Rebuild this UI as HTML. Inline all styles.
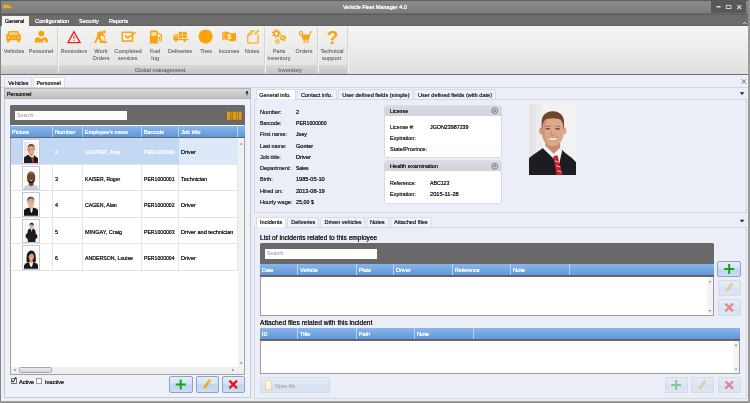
<!DOCTYPE html>
<html><head><meta charset="utf-8"><title>Vehicle Fleet Manager 4.0</title>
<style>
*{box-sizing:border-box;margin:0;padding:0}
html,body{width:750px;height:403px;overflow:hidden;background:#ebeef6;font-family:"Liberation Sans",sans-serif;font-size:5.6px;color:#222}
.a{position:absolute}
.s{-webkit-text-stroke:0.07px;text-shadow:0 0 .6px currentColor;display:inline-block;transform-origin:0 50%;white-space:nowrap}
.rt .s,.tab .s{transform-origin:50% 50%}
.rt .s{-webkit-text-stroke:0;text-shadow:0 0 .5px rgba(108,108,108,.7)}
.t{position:absolute;white-space:nowrap;line-height:8px;height:8px;font-size:5.6px}
#title{left:0;top:0;width:750px;height:14.5px;background:linear-gradient(#5e5e5e 0,#606060 0.8px,#8b8b8b 1.6px,#848484 7px,#7b7b7b 13px,#5c5c5c 14px,#5c5c5c 14.5px)}
#menubar{left:0;top:14.5px;width:750px;height:11.5px;background:linear-gradient(#6c6c6c,#6c6c6c 10.2px,#585858 10.8px)}
#ribbon{left:1px;top:25.7px;width:347px;height:39.3px;background:linear-gradient(#f3f3f1,#e5e5e3)}
#ribbon2{left:348px;top:25.7px;width:401px;height:48.3px;background:linear-gradient(#f5f5f4,#ececeb 50%,#dfdfde)}
#rlabel{left:1px;top:65px;width:347px;height:9px;background:linear-gradient(#d8d8d8,#c5c5c5)}
#rline{left:0;top:73.7px;width:750px;height:1px;background:#6e6e6e}
#lb{left:0;top:0;width:1.2px;height:403px;background:linear-gradient(#5c5c5c,#5c5c5c 26px,#868686 26px)}
#rb{left:748.2px;top:0;width:1.8px;height:403px;background:linear-gradient(#8c8c8c,#8c8c8c 26px,#9c9c9c 26px)}
#bb{left:0;top:401px;width:750px;height:2px;background:linear-gradient(#a4a4a4,#8c8c8c)}
.rt{color:#6c6c6c;text-align:center;font-size:5.6px;line-height:7.6px;position:absolute;white-space:nowrap;transform:translateX(-50%)}
.mt{color:#fff}
.tab{position:absolute;border:1px solid #d8dde8;border-bottom:none;border-radius:1.5px 1.5px 0 0;background:#eef1f8;text-align:center;font-size:5.6px;line-height:9px;padding-top:.6px;white-space:nowrap;color:#333}
.tab.sel{background:#fff}
.hdr{position:absolute;background:linear-gradient(#8ab7ea,#5e97da);height:11px}
.hc{position:absolute;top:0;height:11px;padding-top:1px;border-right:1px solid #b9d3f2;color:#fff;font-size:5.6px;line-height:11px;padding-left:2px;white-space:nowrap}
.dark{position:absolute;background:#696969}
.search{position:absolute;background:#fff;color:#bbb;font-size:5.6px;line-height:9.5px;padding-left:2px}
.row{position:absolute;left:11px;width:227px;height:26.5px;border-bottom:1px solid #e3e3e3;background:#fff}
.cell{position:absolute;top:0;height:26.5px;line-height:26.5px;padding-top:1.2px;font-size:5.6px;white-space:nowrap;padding-left:2.5px;border-right:1px solid #e6e6e6;color:#222}
.row.sel{background:#c3d8f2}.row.sel .cell{color:#fff;border-right-color:transparent}.row.sel .cell.cur{background:#dde9f9;color:#222}
.pic{position:absolute;left:10.5px;top:1.5px;width:18px;height:24px;background:#f4f4f4;border:1px solid #bbb}
.btn{position:absolute;border:1px solid #93a2bb;border-radius:2px;background:linear-gradient(#e3eefb,#d3e3f8 48%,#bdd4f1 52%,#cadef6)}
.btn.dis{border-color:#d3dae8;background:linear-gradient(#e6ecf7,#dde6f4 50%,#d6e1f2 52%,#dbe5f4)}
.lab{color:#333}
.grp{position:absolute;background:#fff;border-radius:1.5px;box-shadow:0 0 0 .6px #c9cdd8}
.grph{position:absolute;left:0;top:0;right:0;height:10px;border-radius:1.5px 1.5px 0 0;background:linear-gradient(#d8dbe3,#d0d3dc);font-size:5.6px;line-height:10px;padding-left:5.5px;color:#222}
</style></head><body>
<!-- title & menu -->
<div class="a" id="title"></div>
<div class="t mt" style="left:343px;top:3.3px"><span class="s" style="transform:scaleX(0.981)">Vehicle Fleet Manager 4.0</span></div>
<div class="a" id="menubar"></div>
<div class="a" id="ribbon"></div><div class="a" id="ribbon2"></div>
<div class="a" id="rlabel"></div>
<div class="a" id="rline"></div>
<div class="a" style="left:2px;top:15.6px;width:27.2px;height:10.4px;background:#f3f3f1;border-radius:1px 1px 0 0"></div>
<div class="t" style="left:5px;top:17px"><span class="s" style="transform:scaleX(0.959)">General</span></div>
<div class="t mt" style="left:35px;top:17px"><span class="s" style="transform:scaleX(1.025)">Configuration</span></div>
<div class="t mt" style="left:79px;top:17px"><span class="s" style="transform:scaleX(0.972)">Security</span></div>
<div class="t mt" style="left:109px;top:17px"><span class="s" style="transform:scaleX(0.977)">Reports</span></div>

<div class="rt" style="left:14px;top:47.6px"><span class="s" style="transform:scaleX(0.972)">Vehicles</span></div>
<div class="rt" style="left:41px;top:47.6px"><span class="s" style="transform:scaleX(0.968)">Personnel</span></div>
<div class="rt" style="left:74px;top:47.6px"><span class="s" style="transform:scaleX(0.971)">Reminders</span></div>
<div class="rt" style="left:101px;top:47.6px"><span class="s" style="transform:scaleX(1.026)">Work</span><br><span class="s" style="transform:scaleX(0.981)">Orders</span></div>
<div class="rt" style="left:128px;top:47.6px"><span class="s" style="transform:scaleX(1.011)">Completed</span><br><span class="s" style="transform:scaleX(0.938)">services</span></div>
<div class="rt" style="left:155px;top:47.6px"><span class="s" style="transform:scaleX(0.939)">Fuel</span><br><span class="s" style="transform:scaleX(1.066)">log</span></div>
<div class="rt" style="left:180px;top:47.6px"><span class="s" style="transform:scaleX(0.972)">Deliveries</span></div>
<div class="rt" style="left:206px;top:47.6px"><span class="s" style="transform:scaleX(0.947)">Tires</span></div>
<div class="rt" style="left:229px;top:47.6px"><span class="s" style="transform:scaleX(0.980)">Incomes</span></div>
<div class="rt" style="left:252px;top:47.6px"><span class="s" style="transform:scaleX(1.007)">Notes</span></div>
<div class="rt" style="left:279px;top:47.6px"><span class="s" style="transform:scaleX(0.938)">Parts</span><br><span class="s" style="transform:scaleX(1.023)">inventory</span></div>
<div class="rt" style="left:304px;top:47.6px"><span class="s" style="transform:scaleX(0.981)">Orders</span></div>
<div class="rt" style="left:332px;top:47.6px"><span class="s" style="transform:scaleX(0.987)">Technical</span><br><span class="s" style="transform:scaleX(1.036)">support</span></div>
<div class="rt" style="left:160px;top:66.6px"><span class="s" style="transform:scaleX(1.001)">Global management</span></div>
<div class="rt" style="left:290px;top:66.6px"><span class="s" style="transform:scaleX(1.015)">Inventory</span></div>
<!--ICONS-->
<svg class="a" style="left:0;top:0" width="750" height="80" viewBox="0 0 750 80">
<g fill="#fba20d" stroke="none">
<!-- logo -->
<path d="M3.2 4.7h4.8v3.2H3.2z M8 5.4h2l1.5 1.3v1.2H8z" fill="#f7a811"/>
<circle cx="4.8" cy="8.1" r="0.8" fill="#f7a811"/><circle cx="9.6" cy="8.1" r="0.8" fill="#f7a811"/>
<!-- car -->
<path d="M8.6 31.3 Q9 31 9.6 31 H17.4 Q18 31 18.4 31.3 L19.6 34.6 H20.8 Q21.3 34.6 21.3 35.1 V35.5 H20.2 Q20.8 36 20.8 37 V40.2 H20 V41.6 Q20 42.2 19.4 42.2 H17.8 Q17.2 42.2 17.2 41.6 V40.2 H9.8 V41.6 Q9.8 42.2 9.2 42.2 H7.6 Q7 42.2 7 41.6 V40.2 H6.2 V37 Q6.2 36 6.8 35.5 H5.7 V35.1 Q5.7 34.6 6.2 34.6 H7.4 Z"/>
<path d="M9.6 32.2 H17.4 L18.3 35 H8.7 Z" fill="#f8cf8a"/>
<circle cx="8.6" cy="37.6" r="1" fill="#f2e3c4"/><circle cx="18.4" cy="37.6" r="1" fill="#f2e3c4"/>
<rect x="11" y="37.2" width="5" height="1.2" fill="#f6c66e"/>
<!-- person -->
<circle cx="41.3" cy="33.6" r="2.9"/>
<path d="M34.8 42.6 V40.4 Q34.8 37.6 38.2 37.2 L41.3 39 L44.4 37.2 Q47.8 37.6 47.8 40.4 V42.6 H45.6 V40.6 H43.2 V42.6 Z"/>
<!-- worker -->
<circle cx="104.2" cy="31.8" r="1.6"/>
<path d="M97.4 32.4 L100.8 31 L102.6 32.2 L104.4 35.6 L102.6 36.4 L101.6 34.8 L100.4 37.4 L101.8 40 L101.2 43 H99.6 L100 40.4 L98.2 38.4 L96 43 H94 L96.8 37 Z"/>
<path d="M99.6 43 Q100.4 40.8 103.4 40.4 Q106.8 40.6 107.8 43 Z"/>
<path d="M103.6 35.4 L104.4 35 L105.6 40.4 L104.8 40.6 Z"/>
<!-- fuel -->
<path d="M150 43 V32 Q150 30.6 151.4 30.6 H156.4 Q157.8 30.6 157.8 32 V43 H158.8 V43.4 H149 V43 Z"/>
<rect x="151.4" y="32.2" width="5" height="3.8" fill="#f4ddb0"/>
<path d="M158.6 32.2 L161.4 34.4 Q162 35 162 36 V40.4 Q162 41.8 160.6 41.8 Q159.2 41.8 159.2 40.4 V38 H157.8 V37 H160.2 V40.4 Q160.2 40.9 160.6 40.9 Q161 40.9 161 40.4 V36.4 L158 33 Z"/>
<!-- truck boxes -->
<rect x="178.6" y="31.8" width="3.8" height="3" /><rect x="183" y="31.8" width="3.8" height="3"/>
<rect x="178.6" y="35.3" width="3.8" height="3" /><rect x="183" y="35.3" width="3.8" height="3"/>
<path d="M173.4 40.2 V36 Q173.4 34.2 175 34.2 H177.8 V38.9 H188.4 V40.2 Z"/>
<rect x="174.4" y="35.2" width="2.2" height="1.8" fill="#f4ddb0"/>
<circle cx="176" cy="40.8" r="1.1"/><circle cx="184.6" cy="40.8" r="1.1"/>
<!-- tire -->
<circle cx="205.6" cy="36.6" r="7.1"/>
<!-- money -->
<path d="M222 32.4 Q225.5 30.6 229 32.4 Q232.5 34.2 236 32.4 V40.4 Q232.5 42.2 229 40.4 Q225.5 38.6 222 40.4 Z"/>
<path d="M222 32.4 L225 31.6 V39.2 L222 40.4Z" fill="#fdb944"/>
<!-- gears -->
<g fill="none" stroke="#fba20d">
<circle cx="276.4" cy="33.6" r="2.3" stroke-width="1.5"/>
<circle cx="276.4" cy="33.6" r="3.7" stroke-width="1.6" stroke-dasharray="1.45 1.455"/>
<circle cx="283" cy="38" r="1.7" stroke-width="1.2"/>
<circle cx="283" cy="38" r="2.8" stroke-width="1.2" stroke-dasharray="1.1 1.1"/>
<circle cx="277.4" cy="41.4" r="1.2" stroke-width="1"/>
<circle cx="277.4" cy="41.4" r="2.1" stroke-width="1" stroke-dasharray="0.82 0.83"/>
<!-- check -->
<rect x="122.3" y="32.3" width="10.2" height="8.8" stroke-width="1.5"/>
<path d="M125.2 35.4 L127.8 38 L135.6 32.4" stroke-width="1.7"/>
<!-- notes -->
<path d="M247.8 43 V35 L252 30.8 H255.2 M258 34.2 V43 H247.8" stroke-width="1.1"/>
<path d="M248 35 H252 V31" stroke-width="0.9"/>
<path d="M254.8 34.2 L258.8 30.2" stroke-width="1.4"/>
<!-- cart -->
<circle cx="301" cy="33.2" r="1.7" stroke-width="1.1"/>
<path d="M312.2 31.8 H310.6 L308 40 H303.6 L301.6 35" stroke-width="1.1"/>
</g>
<path d="M302.2 34.6 H310 L308.2 39.6 H303.9 Z"/>
<circle cx="304.4" cy="42" r="1"/><circle cx="307.8" cy="42" r="1"/>
</g>
<!-- warning -->
<path d="M74 31.7 L80.1 42.7 H67.9 Z" fill="#f8f1f0" stroke="#ee1c24" stroke-width="1.3" stroke-linejoin="miter"/>
<rect x="73.5" y="35.6" width="1" height="3.6" fill="#ee1c24"/><rect x="73.5" y="40" width="1" height="1" fill="#ee1c24"/>
<text x="229.2" y="39" font-family="Liberation Sans, sans-serif" font-size="6.5" font-weight="bold" fill="#fff" text-anchor="middle">$</text>
<text x="332.6" y="43.8" font-family="Liberation Sans, sans-serif" font-size="18.5" font-weight="bold" fill="#fba20d" text-anchor="middle">?</text>
<!-- window buttons -->
<rect x="711" y="0" width="35" height="13" fill="#585858"/>
<rect x="716.5" y="6" width="4" height="1.5" fill="#ddd"/>
<rect x="726.3" y="5.3" width="4.6" height="3.2" fill="none" stroke="#ddd" stroke-width="0.9"/>
<path d="M737.3 5.2 L741.3 9 M741.3 5.2 L737.3 9" stroke="#ddd" stroke-width="1.1" fill="none"/>
<path d="M743.2 24 L744.8 22.4 L746.4 24" stroke="#ddd" stroke-width="1" fill="none"/>
</svg>
<!--/ICONS-->
<!-- ribbon separators -->
<div class="a" style="left:57px;top:27px;width:1px;height:46px;background:#d6d6d4;box-shadow:1px 0 0 #f2f2f0"></div>
<div class="a" style="left:264px;top:27px;width:1px;height:46px;background:#d6d6d4;box-shadow:1px 0 0 #f2f2f0"></div>
<div class="a" style="left:317px;top:27px;width:1px;height:46px;background:#d6d6d4;box-shadow:1px 0 0 #f2f2f0"></div>
<div class="a" style="left:347px;top:27px;width:1px;height:46px;background:#d6d6d4;box-shadow:1px 0 0 #f2f2f0"></div>

<!-- document tabs -->
<div class="a" style="left:1px;top:75px;width:748px;height:12px;background:#edf0f8"></div>
<div class="tab" style="left:4px;top:77px;width:28px;height:10px"><span class="s" style="transform:scaleX(0.972)">Vehicles</span></div>
<div class="tab sel" style="left:33px;top:77px;width:32px;height:10px"><span class="s" style="transform:scaleX(0.968)">Personnel</span></div>
<div class="a" style="left:1px;top:86.5px;width:748px;height:1px;background:#cfd6e4"></div>

<!-- left panel -->
<div class="a" style="left:4px;top:88px;width:246.5px;height:11px;background:linear-gradient(#d8d8d8,#c2c2c2);border:1px solid #b4b4b4"></div>
<div class="t" style="left:6.5px;top:89.5px"><span class="s" style="transform:scaleX(0.968)">Personnel</span></div>
<div class="a" style="left:4px;top:99px;width:246.5px;height:299px;border:1px solid #c3cad8;border-top:none;background:#eef1f8"></div>
<div class="dark" style="left:10px;top:104.5px;width:235px;height:21.5px;border-radius:1.5px 1.5px 0 0"></div>
<div class="search" style="left:15px;top:110.5px;width:112px;height:9.5px"><span class="s" style="transform:scaleX(0.932)">Search</span></div>
<div class="a" style="left:10px;top:125px;width:235px;height:249.5px;background:#fff;border:1px solid #a4a4a4;border-top:none"></div>
<div class="hdr" style="left:10px;top:125.5px;width:235px">
 <div class="hc" style="left:0;width:42.5px"><span class="s" style="transform:scaleX(0.981)">Picture</span></div>
 <div class="hc" style="left:42.5px;width:30px"><span class="s" style="transform:scaleX(1.026)">Number</span></div>
 <div class="hc" style="left:72.5px;width:59px"><span class="s" style="transform:scaleX(0.977)">Employee's name</span></div>
 <div class="hc" style="left:131.5px;width:37px"><span class="s" style="transform:scaleX(0.968)">Barcode</span></div>
 <div class="hc" style="left:168.5px;width:59.5px"><span class="s" style="transform:scaleX(1.017)">Job title</span></div>
</div>
<div class="a" style="left:10px;top:136.5px;width:235px;height:1.6px;background:#666"></div>

<div class="row sel" style="top:138.1px"><div class="cell" style="left:0;width:41.5px"></div><div class="cell" style="left:41.5px;width:30px"><span class="s" style="transform:scaleX(0.973)">2</span></div><div class="cell" style="left:71.5px;width:59px"><span class="s" style="transform:scaleX(0.905)">GONTER, Joey</span></div><div class="cell" style="left:130.5px;width:37px"><span class="s" style="transform:scaleX(0.918)">PER1000000</span></div><div class="cell cur" style="left:167.5px;width:59.5px"><span class="s" style="transform:scaleX(0.995)">Driver</span></div></div>
<div class="row" style="top:164.6px"><div class="cell" style="left:0;width:41.5px"></div><div class="cell" style="left:41.5px;width:30px"><span class="s" style="transform:scaleX(0.973)">3</span></div><div class="cell" style="left:71.5px;width:59px"><span class="s" style="transform:scaleX(0.905)">KAISER, Roger</span></div><div class="cell" style="left:130.5px;width:37px"><span class="s" style="transform:scaleX(0.918)">PER1000001</span></div><div class="cell cur" style="left:167.5px;width:59.5px"><span class="s" style="transform:scaleX(0.991)">Technician</span></div></div>
<div class="row" style="top:191.1px"><div class="cell" style="left:0;width:41.5px"></div><div class="cell" style="left:41.5px;width:30px"><span class="s" style="transform:scaleX(0.973)">4</span></div><div class="cell" style="left:71.5px;width:59px"><span class="s" style="transform:scaleX(0.938)">CAGEN, Alan</span></div><div class="cell" style="left:130.5px;width:37px"><span class="s" style="transform:scaleX(0.918)">PER1000002</span></div><div class="cell cur" style="left:167.5px;width:59.5px"><span class="s" style="transform:scaleX(0.995)">Driver</span></div></div>
<div class="row" style="top:217.6px"><div class="cell" style="left:0;width:41.5px"></div><div class="cell" style="left:41.5px;width:30px"><span class="s" style="transform:scaleX(0.973)">5</span></div><div class="cell" style="left:71.5px;width:59px"><span class="s" style="transform:scaleX(0.990)">MINGAY, Craig</span></div><div class="cell" style="left:130.5px;width:37px"><span class="s" style="transform:scaleX(0.918)">PER1000003</span></div><div class="cell cur" style="left:167.5px;width:59.5px"><span class="s" style="transform:scaleX(0.998)">Driver and technician</span></div></div>
<div class="row" style="top:244.1px"><div class="cell" style="left:0;width:41.5px"></div><div class="cell" style="left:41.5px;width:30px"><span class="s" style="transform:scaleX(0.973)">6</span></div><div class="cell" style="left:71.5px;width:59px"><span class="s" style="transform:scaleX(0.935)">ANDERSON, Louise</span></div><div class="cell" style="left:130.5px;width:37px"><span class="s" style="transform:scaleX(0.918)">PER1000004</span></div><div class="cell cur" style="left:167.5px;width:59.5px"><span class="s" style="transform:scaleX(0.995)">Driver</span></div></div>

<!--PICS-->
<div class="a" style="left:21.7px;top:139.0px;width:18px;height:24.8px;background:#fff;border:1px solid #c8c8c8"></div>
<svg class="a" style="left:23.6px;top:142.2px" width="14.3" height="20.5" viewBox="0 0 48 72" preserveAspectRatio="none"><filter id="pf0" x="-5%" y="-5%" width="110%" height="110%"><feGaussianBlur stdDeviation="1.0"/></filter><rect width="48" height="72" fill="#f2f2f2"/><g filter="url(#pf0)"><rect x="-2" y="-2" width="9" height="76" fill="#e4e4e4"/><rect x="7" y="-2" width="6" height="76" fill="#ececec"/><path d="M-2 74 V56 Q4 51 11 46.5 L17 42 L31 44 L37 49.5 Q44 54 50 61 V74 Z" fill="#1a1a20"/><path d="M12.5 43 L17 40 H30.5 L33.5 47 L30.5 60 L26 56 Z" fill="#f4f4f6"/><path d="M24.5 52.5 L28.8 51.5 L34.2 73 H28 Z" fill="#c4202c"/><path d="M26 57 L30.6 58.4 M27.4 62 L31.8 63.4 M28.8 67 L33 68.4" stroke="#f0c0c0" stroke-width="1"/><path d="M16.5 34 H31.5 V44 L25 50 L16.5 42 Z" fill="#c58b6c"/><ellipse cx="12.2" cy="27" rx="1.9" ry="3.4" fill="#d09878"/><ellipse cx="35.9" cy="27" rx="1.9" ry="3.4" fill="#dca88a"/><path d="M12.8 20 Q12 8 24 7.2 Q36 8 35.4 20 V25 H12.8 Z" fill="#6f452c"/><path d="M13.6 23 Q14 15.6 19 14.8 Q25 13.8 30 15 Q34.2 16 34.6 23 L35.2 25 V29 Q34.8 37 29 41 Q24 43.6 19 41 Q13.2 37 12.8 29 V25 Z" fill="#dca88a"/><path d="M13.6 23 L12.8 25 V29 Q13.2 37 19 41 Q16 34 16.4 26 Q16.4 20 18 15.4 Q14 16.4 13.6 23Z" fill="#c48a6a" opacity=".6"/><rect x="17" y="24.2" width="4.2" height="1.4" fill="#4a3024" opacity=".8"/><rect x="26.8" y="24.2" width="4.2" height="1.4" fill="#4a3024" opacity=".8"/><path d="M16.6 22.4 H21.6 M26.6 22.4 H31.6" stroke="#6f452c" stroke-width=".8" opacity=".7"/><path d="M19.4 33.6 Q24 35 29 33.6 Q24.3 38.8 19.4 33.6Z" fill="#fff"/><path d="M18.6 33 Q24 35.4 29.8 33" fill="none" stroke="#a8644a" stroke-width=".7" opacity=".7"/><path d="M22.8 27 L22 31.2 H26" fill="none" stroke="#a05a3c" stroke-width=".8" opacity=".55"/></g></svg>
<div class="a" style="left:21.7px;top:165.5px;width:18px;height:24.8px;background:#fff;border:1px solid #c8c8c8"></div>
<svg class="a" style="left:23.6px;top:168.7px" width="14.3" height="20.5" viewBox="0 0 48 72" preserveAspectRatio="none"><filter id="pf1" x="-5%" y="-5%" width="110%" height="110%"><feGaussianBlur stdDeviation="1.0"/></filter><rect width="48" height="72" fill="#fbfbfb"/><g filter="url(#pf1)"><path d="M-1 73 V64 Q6 56 16 55 L32 55 Q42 56 49 64 V73 Z" fill="#b9d4ec"/><path d="M16 42 H32 V56 L24 61 L16 56 Z" fill="#6e452b"/><ellipse cx="24" cy="28" rx="14" ry="19" fill="#6e452b"/><path d="M11 34 Q24 56 37 34 Q37 49 24 51 Q11 49 11 34Z" fill="#2e1d14"/><ellipse cx="24" cy="14" rx="9" ry="4.5" fill="#8e5e40"/><path d="M18 38 Q24 40 30 38 Q24 45 18 38Z" fill="#fff"/></g></svg>
<div class="a" style="left:21.7px;top:192.0px;width:18px;height:24.8px;background:#fff;border:1px solid #c8c8c8"></div>
<svg class="a" style="left:23.6px;top:195.2px" width="14.3" height="20.5" viewBox="0 0 48 72" preserveAspectRatio="none"><filter id="pf2" x="-5%" y="-5%" width="110%" height="110%"><feGaussianBlur stdDeviation="1.0"/></filter><rect width="48" height="72" fill="#fbfbfb"/><g filter="url(#pf2)"><path d="M-1 73 V54 Q4 47 14 45 L34 45 Q44 47 49 54 V73 Z" fill="#141418"/><path d="M20 44 H30 L28 58 L25 64 L22 58 Z" fill="#dfe8f2"/><path d="M17 34 H30 V45 L24 49 L17 45 Z" fill="#e0b193"/><ellipse cx="23" cy="25" rx="11.5" ry="18" fill="#e0b193"/><path d="M11 24 Q9 6 22 6 Q35 5 35 22 Q32 13 25 12 Q15 12 11 24Z" fill="#5e4636"/><rect x="16" y="23" width="4.5" height="1.6" fill="#4a3024" opacity=".7"/><rect x="25.5" y="23" width="4.5" height="1.6" fill="#4a3024" opacity=".7"/><path d="M18.5 34 Q23 35.5 27.5 34 Q23 38.5 18.5 34Z" fill="#fff"/></g></svg>
<div class="a" style="left:21.7px;top:218.5px;width:18px;height:24.8px;background:#fff;border:1px solid #c8c8c8"></div>
<svg class="a" style="left:23.6px;top:221.7px" width="14.3" height="20.5" viewBox="0 0 48 72" preserveAspectRatio="none"><filter id="pf3" x="-5%" y="-5%" width="110%" height="110%"><feGaussianBlur stdDeviation="1.0"/></filter><rect width="48" height="72" fill="#f6f6f6"/><g filter="url(#pf3)"><path d="M13 73 V44 Q10 30 17 24 L33 24 Q41 30 39 44 L38 73 Z" fill="#1c1c20"/><path d="M5 52 Q6 40 13 39 L37 40 Q46 42 45 54 L38 61 L12 61 Z" fill="#1e1e22"/><path d="M22 22 H29 L26 35 Z" fill="#ececec"/><ellipse cx="25.5" cy="13" rx="6.6" ry="9" fill="#d6a588"/><path d="M18.5 12 Q18 2.5 26 3 Q33.5 3.5 32.5 13 Q30 7.5 25 7.5 Q20 8 18.5 12Z" fill="#2a1c16"/></g></svg>
<div class="a" style="left:21.7px;top:245.0px;width:18px;height:24.8px;background:#fff;border:1px solid #c8c8c8"></div>
<svg class="a" style="left:23.6px;top:248.2px" width="14.3" height="20.5" viewBox="0 0 48 72" preserveAspectRatio="none"><filter id="pf4" x="-5%" y="-5%" width="110%" height="110%"><feGaussianBlur stdDeviation="1.0"/></filter><rect width="48" height="72" fill="#fbfbfb"/><g filter="url(#pf4)"><path d="M9 50 Q6 20 16 12 Q24 6 33 12 Q42 22 39 50 Z" fill="#241610"/><path d="M-1 73 V62 Q4 52 15 50 L33 50 Q44 52 49 62 V73 Z" fill="#17171b"/><path d="M17 48 H31 L28 62 L24 68 L20 62 Z" fill="#f2f2f2"/><path d="M19 38 H29 V50 L24 54 L19 50 Z" fill="#d9a27e"/><ellipse cx="24.5" cy="30" rx="9" ry="12.5" fill="#d9a27e"/><path d="M14 30 Q13 14 24 13 Q36 13 35 30 Q33 20 27 18 Q20 20 14 30Z" fill="#241610"/><path d="M20.5 36 Q24.5 37.5 28.5 36 Q24.5 40.5 20.5 36Z" fill="#fff"/></g></svg>
<!--/PICS-->
<!-- bottom of left panel -->
<div class="a" style="left:11px;top:366.5px;width:233px;height:7px;background:#efefef"></div>
<div class="a" style="left:18.5px;top:367.2px;width:33.3px;height:5.8px;background:linear-gradient(#ececec,#d6d6d6);border:1px solid #a8a8a8;border-radius:1.5px"></div>
<div class="a" style="left:237.8px;top:138.5px;width:6.2px;height:228px;background:#f1f1f1"></div>
<div class="a" style="left:10.5px;top:377.5px;width:6px;height:6px;border:1px solid #777;background:#fff"></div>
<div class="t" style="left:19px;top:377.5px"><span class="s" style="transform:scaleX(0.992)">Active</span></div>
<div class="a" style="left:35.5px;top:377.5px;width:6px;height:6px;border:1px solid #999;background:#fff"></div>
<div class="t" style="left:44.5px;top:377.5px"><span class="s" style="transform:scaleX(0.987)">Inactive</span></div>
<div class="btn" style="left:169px;top:376px;width:23.5px;height:16.5px"></div>
<div class="btn" style="left:195.5px;top:376px;width:23.5px;height:16.5px"></div>
<div class="btn" style="left:221.5px;top:376px;width:23.5px;height:16.5px"></div>

<!-- right panel -->
<div class="tab sel" style="left:255.5px;top:89px;width:40px;height:10.5px"><span class="s" style="transform:scaleX(0.982)">General info.</span></div>
<div class="tab" style="left:297px;top:89px;width:40px;height:10.5px"><span class="s" style="transform:scaleX(1.005)">Contact info.</span></div>
<div class="tab" style="left:338px;top:89px;width:75px;height:10.5px"><span class="s" style="transform:scaleX(0.992)">User defined fields (simple)</span></div>
<div class="tab" style="left:414px;top:89px;width:82px;height:10.5px"><span class="s" style="transform:scaleX(1.001)">User defined fields (with date)</span></div>
<div class="a" style="left:254px;top:98.5px;width:492.5px;height:114.2px;border:1px solid #d3d8e4;background:#ebeef6"></div>
<div class="a" style="left:257px;top:99px;width:38px;height:1.5px;background:#ebeef6"></div>

<div class="t lab" style="left:260px;top:108px"><span class="s" style="transform:scaleX(1.009)">Number:</span></div><div class="t" style="left:296px;top:108px"><span class="s" style="transform:scaleX(0.973)">2</span></div>
<div class="t lab" style="left:260px;top:119px"><span class="s" style="transform:scaleX(0.955)">Barcode:</span></div><div class="t" style="left:296px;top:119px"><span class="s" style="transform:scaleX(0.918)">PER1000000</span></div>
<div class="t lab" style="left:260px;top:130px"><span class="s" style="transform:scaleX(0.962)">First name:</span></div><div class="t" style="left:296px;top:130px"><span class="s" style="transform:scaleX(0.927)">Joey</span></div>
<div class="t lab" style="left:260px;top:142px"><span class="s" style="transform:scaleX(0.953)">Last name:</span></div><div class="t" style="left:296px;top:142px"><span class="s" style="transform:scaleX(1.001)">Gonter</span></div>
<div class="t lab" style="left:260px;top:153px"><span class="s" style="transform:scaleX(1.000)">Job title:</span></div><div class="t" style="left:296px;top:153px"><span class="s" style="transform:scaleX(0.995)">Driver</span></div>
<div class="t lab" style="left:260px;top:164px"><span class="s" style="transform:scaleX(1.006)">Department:</span></div><div class="t" style="left:296px;top:164px"><span class="s" style="transform:scaleX(0.895)">Sales</span></div>
<div class="t lab" style="left:260px;top:175px"><span class="s" style="transform:scaleX(0.983)">Birth:</span></div><div class="t" style="left:296px;top:175px"><span class="s" style="transform:scaleX(1.004)">1985-05-10</span></div>
<div class="t lab" style="left:260px;top:187px"><span class="s" style="transform:scaleX(1.004)">Hired on:</span></div><div class="t" style="left:296px;top:187px"><span class="s" style="transform:scaleX(1.004)">2013-08-19</span></div>
<div class="t lab" style="left:260px;top:198px"><span class="s" style="transform:scaleX(0.993)">Hourly wage:</span></div><div class="t" style="left:296px;top:198px"><span class="s" style="transform:scaleX(0.959)">25,00 $</span></div>

<div class="grp" style="left:384.5px;top:105.5px;width:116px;height:51px"><div class="grph"><span class="s" style="transform:scaleX(0.936)">License</span></div></div>
<div class="t lab" style="left:390px;top:122.5px"><span class="s" style="transform:scaleX(0.946)">License #:</span></div><div class="t" style="left:430px;top:122.5px"><span class="s" style="transform:scaleX(0.953)">JGON23987239</span></div>
<div class="t lab" style="left:390px;top:134px;"><span class="s" style="transform:scaleX(0.978)">Expiration:</span></div>
<div class="t lab" style="left:390px;top:145px"><span class="s" style="transform:scaleX(0.980)">State/Province:</span></div>
<div class="grp" style="left:384.5px;top:161px;width:116px;height:42px"><div class="grph"><span class="s" style="transform:scaleX(1.005)">Health examination</span></div></div>
<div class="t lab" style="left:390px;top:178.5px"><span class="s" style="transform:scaleX(0.944)">Reference:</span></div><div class="t" style="left:430px;top:178.5px"><span class="s" style="transform:scaleX(0.931)">ABC123</span></div>
<div class="t lab" style="left:390px;top:189.5px"><span class="s" style="transform:scaleX(0.978)">Expiration:</span></div><div class="t" style="left:430px;top:189.5px"><span class="s" style="transform:scaleX(1.019)">2015-11-28</span></div>

<!--BIG-->
<svg class="a" style="left:528.5px;top:103.7px" width="47.5" height="71.7" viewBox="0 0 48 72" preserveAspectRatio="none"><filter id="pfbig" x="-5%" y="-5%" width="110%" height="110%"><feGaussianBlur stdDeviation="0.45"/></filter><rect width="48" height="72" fill="#f2f2f2"/><g filter="url(#pfbig)"><rect x="-2" y="-2" width="9" height="76" fill="#e4e4e4"/><rect x="7" y="-2" width="6" height="76" fill="#ececec"/><path d="M-2 74 V56 Q4 51 11 46.5 L17 42 L31 44 L37 49.5 Q44 54 50 61 V74 Z" fill="#1a1a20"/><path d="M12.5 43 L17 40 H30.5 L33.5 47 L30.5 60 L26 56 Z" fill="#f4f4f6"/><path d="M24.5 52.5 L28.8 51.5 L34.2 73 H28 Z" fill="#c4202c"/><path d="M26 57 L30.6 58.4 M27.4 62 L31.8 63.4 M28.8 67 L33 68.4" stroke="#f0c0c0" stroke-width="1"/><path d="M16.5 34 H31.5 V44 L25 50 L16.5 42 Z" fill="#c58b6c"/><ellipse cx="12.2" cy="27" rx="1.9" ry="3.4" fill="#d09878"/><ellipse cx="35.9" cy="27" rx="1.9" ry="3.4" fill="#dca88a"/><path d="M12.8 20 Q12 8 24 7.2 Q36 8 35.4 20 V25 H12.8 Z" fill="#6f452c"/><path d="M13.6 23 Q14 15.6 19 14.8 Q25 13.8 30 15 Q34.2 16 34.6 23 L35.2 25 V29 Q34.8 37 29 41 Q24 43.6 19 41 Q13.2 37 12.8 29 V25 Z" fill="#dca88a"/><path d="M13.6 23 L12.8 25 V29 Q13.2 37 19 41 Q16 34 16.4 26 Q16.4 20 18 15.4 Q14 16.4 13.6 23Z" fill="#c48a6a" opacity=".6"/><rect x="17" y="24.2" width="4.2" height="1.4" fill="#4a3024" opacity=".8"/><rect x="26.8" y="24.2" width="4.2" height="1.4" fill="#4a3024" opacity=".8"/><path d="M16.6 22.4 H21.6 M26.6 22.4 H31.6" stroke="#6f452c" stroke-width=".8" opacity=".7"/><path d="M19.4 33.6 Q24 35 29 33.6 Q24.3 38.8 19.4 33.6Z" fill="#fff"/><path d="M18.6 33 Q24 35.4 29.8 33" fill="none" stroke="#a8644a" stroke-width=".7" opacity=".7"/><path d="M22.8 27 L22 31.2 H26" fill="none" stroke="#a05a3c" stroke-width=".8" opacity=".55"/></g></svg>
<!--/BIG-->
<!-- lower tabs -->
<div class="tab sel" style="left:256px;top:216.5px;width:30px;height:10.5px"><span class="s" style="transform:scaleX(0.998)">Incidents</span></div>
<div class="tab" style="left:287px;top:216.5px;width:32px;height:10.5px"><span class="s" style="transform:scaleX(0.972)">Deliveries</span></div>
<div class="tab" style="left:320px;top:216.5px;width:45px;height:10.5px"><span class="s" style="transform:scaleX(0.977)">Driven vehicles</span></div>
<div class="tab" style="left:366px;top:216.5px;width:23px;height:10.5px"><span class="s" style="transform:scaleX(1.007)">Notes</span></div>
<div class="tab" style="left:390px;top:216.5px;width:42px;height:10.5px"><span class="s" style="transform:scaleX(1.002)">Attached files</span></div>
<div class="a" style="left:254px;top:226.5px;width:492.5px;height:172.2px;border:1px solid #d3d8e4;background:#ebeef6"></div>
<div class="a" style="left:257px;top:226.5px;width:28px;height:1.5px;background:#ebeef6"></div>
<div class="t" style="left:260px;top:233.6px;"><span class="s" style="transform:scaleX(1.014);font-size:6.5px">List of incidents related to this employee</span></div>
<div class="dark" style="left:260px;top:242.5px;width:454px;height:22px;border-radius:1.5px 1.5px 0 0"></div>
<div class="search" style="left:265px;top:249px;width:112px;height:9.5px"><span class="s" style="transform:scaleX(0.932)">Search</span></div>
<div class="a" style="left:260px;top:264px;width:454px;height:51.5px;background:#fff;border:1px solid #9c9c9c;border-top:none"></div>
<div class="hdr" style="left:260px;top:264px;width:454px">
 <div class="hc" style="left:0;width:37.5px"><span class="s" style="transform:scaleX(0.985)">Date</span></div>
 <div class="hc" style="left:37.5px;width:59px"><span class="s" style="transform:scaleX(0.990)">Vehicle</span></div>
 <div class="hc" style="left:96.5px;width:37px"><span class="s" style="transform:scaleX(0.958)">Plate</span></div>
 <div class="hc" style="left:133.5px;width:59px"><span class="s" style="transform:scaleX(0.995)">Driver</span></div>
 <div class="hc" style="left:192.5px;width:58.5px"><span class="s" style="transform:scaleX(0.953)">Reference</span></div>
 <div class="hc" style="left:251px;width:59px"><span class="s" style="transform:scaleX(1.044)">Note</span></div>
</div>
<div class="a" style="left:260px;top:275px;width:454px;height:1.5px;background:#666"></div>
<div class="a" style="left:707px;top:277px;width:6px;height:37px;background:#f3f3f3"></div>

<div class="btn" style="left:717.3px;top:260.6px;width:23.5px;height:16.5px"></div>
<div class="btn dis" style="left:717.5px;top:279.5px;width:23.5px;height:16.5px"></div>
<div class="btn dis" style="left:717.5px;top:299px;width:23.5px;height:16.5px"></div>

<div class="t" style="left:260px;top:318.5px;"><span class="s" style="transform:scaleX(1.020);font-size:6.5px">Attached files related with this incident</span></div>
<div class="a" style="left:260px;top:328px;width:480px;height:45.5px;background:#fff;border:1px solid #9c9c9c"></div>
<div class="hdr" style="left:260px;top:328px;width:480px">
 <div class="hc" style="left:0;width:37.5px"><span class="s" style="transform:scaleX(0.971)">ID</span></div>
 <div class="hc" style="left:37.5px;width:59px"><span class="s" style="transform:scaleX(1.014)">Title</span></div>
 <div class="hc" style="left:96.5px;width:58.5px"><span class="s" style="transform:scaleX(0.964)">Path</span></div>
 <div class="hc" style="left:155px;width:59px"><span class="s" style="transform:scaleX(1.044)">Note</span></div>
</div>
<div class="a" style="left:260px;top:339px;width:480px;height:1.5px;background:#666"></div>
<div class="a" style="left:733px;top:341px;width:6px;height:32px;background:#f3f3f3"></div>
<div class="btn dis" style="left:260.3px;top:377.2px;width:70.2px;height:15.6px"></div>
<div class="t" style="left:275px;top:381.5px;color:#b4b4b4;font-size:5px"><span class="s" style="transform:scaleX(1.010)">Open file</span></div>
<div class="btn dis" style="left:664.5px;top:377px;width:23.5px;height:16px"></div>
<div class="btn dis" style="left:690.5px;top:377px;width:23.5px;height:16px"></div>
<div class="btn dis" style="left:717.5px;top:377px;width:23.5px;height:16px"></div>

<!--OVER-->
<svg class="a" style="left:0;top:75px" width="750" height="328" viewBox="0 75 750 328">
<!-- doc close X, dropdown arrows, pin -->
<path d="M741.8 79.3 L746 83.7 M746 79.3 L741.8 83.7" stroke="#444" stroke-width="0.8" fill="none"/>
<path d="M739.8 92.3 H744.4 L742.1 95 Z" fill="#222"/>
<path d="M739.8 219.8 H744.4 L742.1 222.5 Z" fill="#222"/>
<path d="M246 91 H248 V93.6 H248.5 V94.1 H247.3 V96 H246.7 V94.1 H245.5 V93.6 H246 Z" fill="#444"/>
<!-- barcode -->
<g fill="#e39a12"><rect x="227" y="111.8" width="3.6" height="8"/><rect x="231.2" y="111.8" width="1.2" height="8"/><rect x="233" y="111.8" width="3.2" height="8"/><rect x="236.8" y="111.8" width="1.4" height="8"/><rect x="238.8" y="111.8" width="2.8" height="8"/></g>
<g fill="#b87a10"><rect x="230.6" y="111.8" width=".6" height="8"/><rect x="232.4" y="111.8" width=".6" height="8"/><rect x="236.2" y="111.8" width=".6" height="8"/><rect x="238.2" y="111.8" width=".6" height="8"/></g>
<!-- collapse icons -->
<g fill="none" stroke="#555" stroke-width="0.7">
<circle cx="494.7" cy="110.6" r="2.9"/><path d="M493.4 110.6 L494.7 109.3 L496 110.6 M493.4 112 L494.7 110.7 L496 112"/>
<circle cx="494.7" cy="166.2" r="2.9"/><path d="M493.4 166 L494.7 164.7 L496 166 M493.4 167.4 L494.7 166.1 L496 167.4"/>
</g>
<!-- scroll arrows -->
<g fill="#999">
<path d="M239.8 144.8 L241.2 142.6 L242.6 144.8Z"/><path d="M239.8 362.2 L241.2 364.4 L242.6 362.2Z"/>
<path d="M15.6 368.6 V371.6 L13.4 370.1Z"/><path d="M232 368.6 V371.6 L234.2 370.1Z"/>
<path d="M708.6 282.4 L710 280.2 L711.4 282.4Z"/><path d="M708.6 310 L710 312.2 L711.4 310Z"/>
<path d="M734.6 346 L736 343.8 L737.4 346Z"/><path d="M734.6 368.4 L736 370.6 L737.4 368.4Z"/>
</g>
<!-- left buttons icons -->
<path d="M180.7 379.4 V389.4 M175.7 384.4 H185.7" stroke="#1aa11a" stroke-width="2" fill="none"/>
<g transform="translate(206.8 384.4) rotate(36)"><path d="M-1.4 -5.4 H1.4 V3 L0 5.8 L-1.4 3Z" fill="#f7a51c"/><rect x="-1.4" y="-3.6" width="2.8" height=".8" fill="#fbd08a"/></g>
<path d="M229.4 380.6 L237 388.2 M237 380.6 L229.4 388.2" stroke="#ee1111" stroke-width="2.3" fill="none"/>
<!-- right list buttons icons -->
<path d="M729.2 264 V274 M724.2 269 H734.2" stroke="#1aa11a" stroke-width="2" fill="none"/>
<g opacity=".4" transform="translate(729.2 287.8) rotate(36)"><path d="M-1.4 -5.4 H1.4 V3 L0 5.8 L-1.4 3Z" fill="#f7a51c"/></g>
<path d="M725.4 303.6 L733 311.2 M733 303.6 L725.4 311.2" stroke="#ee1111" stroke-width="2.3" fill="none" opacity=".45"/>
<!-- bottom right buttons -->
<path d="M676.2 380 V390 M671.2 385 H681.2" stroke="#1aa11a" stroke-width="2" fill="none" opacity=".45"/>
<g opacity=".4" transform="translate(702.2 385) rotate(36)"><path d="M-1.4 -5.4 H1.4 V3 L0 5.8 L-1.4 3Z" fill="#f7a51c"/></g>
<path d="M725.4 381.2 L733 388.8 M733 381.2 L725.4 388.8" stroke="#ee1111" stroke-width="2.3" fill="none" opacity=".45"/>
<!-- open file icon -->
<path d="M265.6 380.2 H269.4 L271.4 382.2 V389.6 H265.6 Z" fill="#fdf6e6" stroke="#f2c777" stroke-width=".7"/>
<!-- check mark -->
<path d="M11.6 380 L13.2 382.2 L16 377" stroke="#222" stroke-width="1" fill="none"/>
</svg>
<!--/OVER-->
<div class="a" id="lb"></div><div class="a" id="rb"></div><div class="a" id="bb"></div>
</body></html>
